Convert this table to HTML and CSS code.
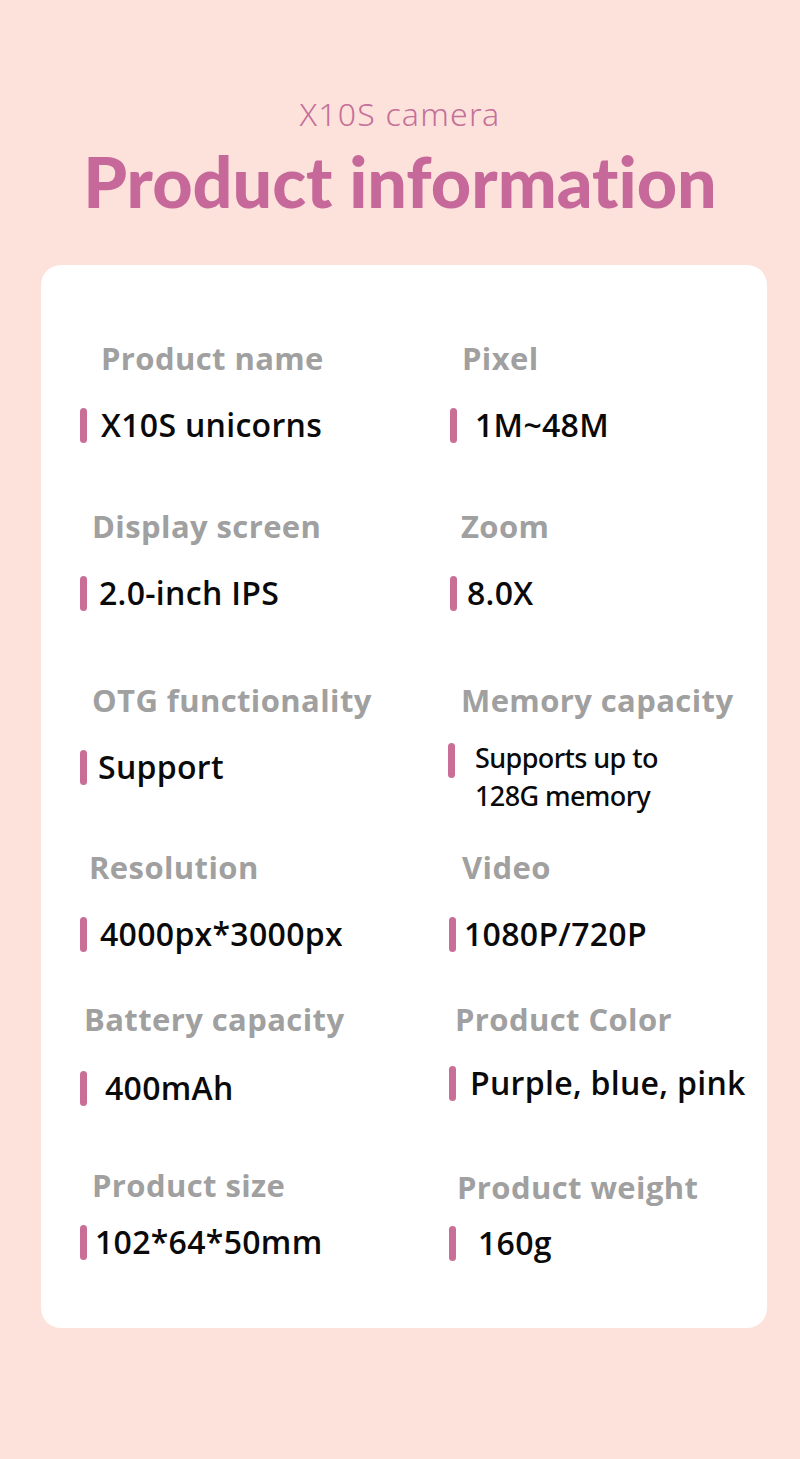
FILE: index.html
```html
<!DOCTYPE html>
<html lang="en">
<head>
<meta charset="utf-8">
<title>X10S camera - Product information</title>
<link rel="stylesheet" href="styles.css">
</head>
<body>
<header class="hero">
  <p class="hero__sub">X10S camera</p>
  <h1 class="hero__title">Product information</h1>
</header>
<main class="card">
  <div class="specs">
    <div class="spec spec--l1"><div class="spec__label">Product name</div><div class="spec__value"><span class="bar"></span><span class="spec__text">X10S unicorns</span></div></div>
    <div class="spec spec--r1"><div class="spec__label">Pixel</div><div class="spec__value"><span class="bar"></span><span class="spec__text">1M~48M</span></div></div>
    <div class="spec spec--l2"><div class="spec__label">Display screen</div><div class="spec__value"><span class="bar"></span><span class="spec__text">2.0-inch IPS</span></div></div>
    <div class="spec spec--r2"><div class="spec__label">Zoom</div><div class="spec__value"><span class="bar"></span><span class="spec__text">8.0X</span></div></div>
    <div class="spec spec--l3"><div class="spec__label">OTG functionality</div><div class="spec__value"><span class="bar"></span><span class="spec__text">Support</span></div></div>
    <div class="spec spec--r3"><div class="spec__label">Memory capacity</div><div class="spec__value spec__value--multi"><span class="bar"></span><span class="spec__text spec__text--small">Supports up to<br>128G memory</span></div></div>
    <div class="spec spec--l4"><div class="spec__label">Resolution</div><div class="spec__value"><span class="bar"></span><span class="spec__text">4000px*3000px</span></div></div>
    <div class="spec spec--r4"><div class="spec__label">Video</div><div class="spec__value"><span class="bar"></span><span class="spec__text">1080P/720P</span></div></div>
    <div class="spec spec--l5"><div class="spec__label">Battery capacity</div><div class="spec__value"><span class="bar"></span><span class="spec__text">400mAh</span></div></div>
    <div class="spec spec--r5"><div class="spec__label">Product Color</div><div class="spec__value"><span class="bar"></span><span class="spec__text">Purple, blue, pink</span></div></div>
    <div class="spec spec--l6"><div class="spec__label">Product size</div><div class="spec__value"><span class="bar"></span><span class="spec__text">102*64*50mm</span></div></div>
    <div class="spec spec--r6"><div class="spec__label">Product weight</div><div class="spec__value"><span class="bar"></span><span class="spec__text">160g</span></div></div>
  </div>
</main>
</body>
</html>
```
FILE: styles.css
```css
* { box-sizing: border-box; }
html, body { margin: 0; padding: 0; }
body {
  background: #fde2dc;
  font-family: "Open Sans", "Noto Sans", sans-serif;
  width: 800px;
  min-height: 1459px;
}
.hero {
  padding-top: 95px;
  text-align: center;
  height: 265px;
}
.hero__sub {
  margin: 0;
  font-family: "Noto Sans", "Open Sans", sans-serif;
  font-weight: 300;
  font-size: 32px;
  line-height: 38px;
  letter-spacing: 1.2px;
  color: #c56f99;
}
.hero__title {
  margin: 8px 0 0;
  font-family: "Lato", "Noto Sans", sans-serif;
  font-weight: 900;
  font-size: 70px;
  line-height: 80px;
  font-variant-ligatures: none;
  color: #c6699a;
}
.card {
  margin: 0 33px 0 41px;
  height: 1063px;
  background: #ffffff;
  border-radius: 20px;
  padding: 73px 0 0 39px;
}
.specs {
  display: grid;
  grid-template-columns: 369px 1fr;
  grid-template-rows: 168px 174px 167px 152px 166px auto;
}
.spec__label {
  font-weight: 700;
  font-size: 31px;
  line-height: 40px;
  letter-spacing: 0.4px;
  color: #a0a0a0;
  padding-left: 12px;
  white-space: nowrap;
}
.spec__value {
  margin-top: 27px;
  display: flex;
  align-items: center;
  height: 40px;
}
.bar {
  flex: none;
  width: 7px;
  height: 35px;
  border-radius: 4px;
  background: #c96e97;
}
.spec__text {
  padding-left: 13px;
  font-weight: 600;
  font-size: 32px;
  line-height: 40px;
  letter-spacing: 0.3px;
  color: #0a0a0a;
  white-space: nowrap;
}
.spec__value--multi {
  height: 76px;
  margin-top: 23px;
  align-items: flex-start;
}
.spec__text--small {
  padding-left: 20px;
  margin-top: -4px;
  font-family: "Noto Sans", "Open Sans", sans-serif;
  font-weight: 500;
  font-size: 27px;
  line-height: 38px;
  letter-spacing: -0.6px;
}
/* individual offsets */
.spec--l1 .spec__label { padding-left: 21px; }
.spec--l1 .spec__text { padding-left: 14px; }
.spec--l2 .spec__text { padding-left: 12px; }
.spec--l3 .spec__text { padding-left: 11px; }
.spec--l4 .spec__label { padding-left: 9px; }
.spec--l4 .spec__text { padding-left: 13px; }
.spec--l5 .spec__label { padding-left: 4px; }
.spec--l5 .spec__value { margin-top: 29px; }
.spec--l5 .spec__text { padding-left: 18px; }
.spec--l6 .spec__value { margin-top: 17px; }
.spec--l6 .spec__text { padding-left: 8px; }
.spec--r1 .spec__label { padding-left: 13px; }
.spec--r1 .spec__value { margin-left: 1px; }
.spec--r1 .spec__text { padding-left: 18px; }
.spec--r2 .spec__value { margin-left: 1px; }
.spec--r2 .spec__text { padding-left: 10px; }
.spec--r3 .spec__value { margin-left: -1px; }
.spec--r4 .spec__label { padding-left: 13px; }
.spec--r4 .spec__text { padding-left: 8px; }
.spec--r5 .spec__label { padding-left: 6px; }
.spec--r5 .spec__value { margin-top: 24px; }
.spec--r5 .spec__text { padding-left: 14px; }
.spec--r6 .spec__label { padding-left: 8px; margin-top: 2px; }
.spec--r6 .spec__value { margin-top: 16px; }
.spec--r6 .spec__text { padding-left: 22px; }
```
